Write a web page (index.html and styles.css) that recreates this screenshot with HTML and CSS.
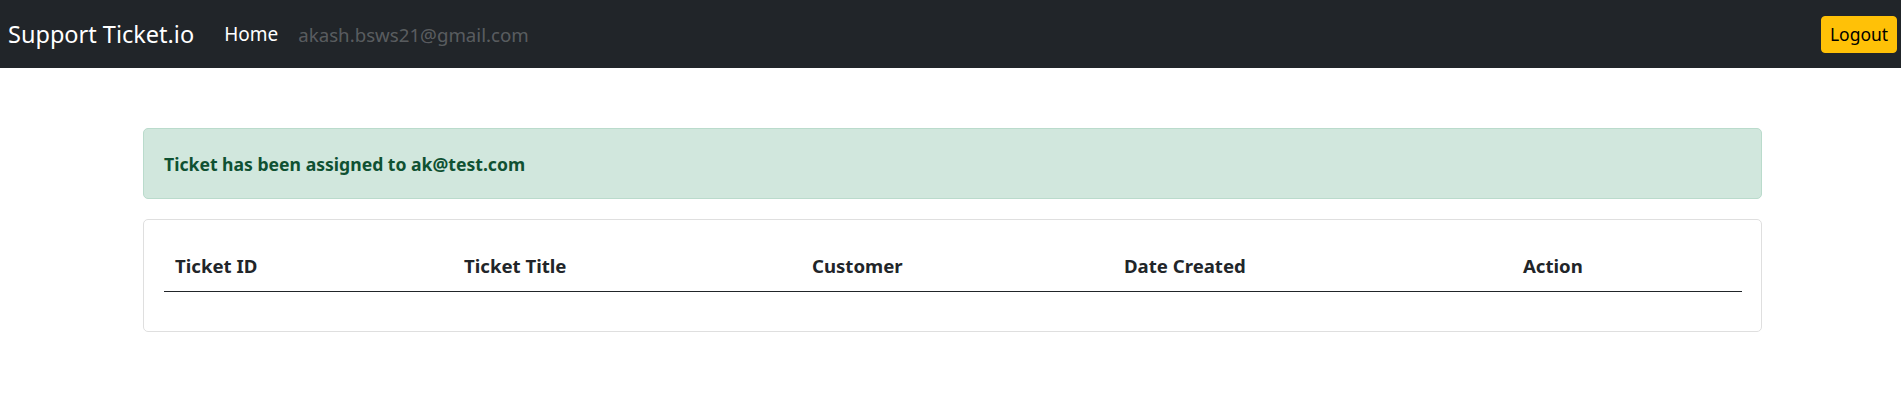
FILE: index.html
```html
<!DOCTYPE html>
<html lang="en">
<head>
<meta charset="utf-8">
<title>Support Ticket.io</title>
<link rel="stylesheet" href="styles.css">
</head>
<body>
<nav class="navbar">
  <a class="brand" href="#">Support Ticket.io</a>
  <a class="nav-link active" href="#">Home</a>
  <span class="nav-link muted">akash.bsws21@gmail.com</span>
  <button class="btn-logout" type="button">Logout</button>
</nav>
<main class="page">
  <div class="alert">Ticket has been assigned to ak@test.com</div>
  <div class="card">
    <table class="table">
      <thead>
        <tr>
          <th class="col-id">Ticket ID</th>
          <th class="col-title">Ticket Title</th>
          <th class="col-customer">Customer</th>
          <th class="col-date">Date Created</th>
          <th class="col-action">Action</th>
        </tr>
      </thead>
      <tbody></tbody>
    </table>
  </div>
</main>
</body>
</html>
```

FILE: styles.css
```css
* { box-sizing: border-box; }
body {
  margin: 0;
  font-family: "Segoe UI", "Noto Sans", "Open Sans", sans-serif;
  color: #212529;
  background: #fff;
}
.navbar {
  display: flex;
  align-items: center;
  height: 68px;
  padding: 0 4px 0 8px;
  background: #212529;
}
.brand {
  font-size: 23.5px;
  color: #fff;
  text-decoration: none;
  margin-right: 30px;
}
.nav-link {
  font-size: 19px;
  text-decoration: none;
  margin-right: 20px;
}
.nav-link.active { color: #fff; }
.nav-link.muted { color: rgba(255,255,255,.27); font-size: 18.7px; }
.btn-logout {
  margin-left: auto;
  width: 76px;
  height: 37px;
  padding: 0;
  background: #ffc107;
  border: 1px solid #ffc107;
  border-radius: 4px;
  color: #000;
  font-family: inherit;
  font-size: 17.5px;
}
.page {
  padding: 60px 139px 0 143px;
}
.alert {
  padding: 21px 20px 19px;
  line-height: 29px;
  font-size: 17.6px;
  font-weight: 700;
  color: #0f5132;
  background: #d1e7dd;
  border: 1px solid #badbcc;
  border-radius: 5px;
  margin-bottom: 20px;
}
.card {
  border: 1px solid #dfdfdf;
  border-radius: 5px;
  padding: 20px;
}
.table {
  width: 100%;
  border-collapse: collapse;
  margin-bottom: 19px;
  table-layout: fixed;
}
.table th {
  text-align: left;
  padding: 11px 11px 10px;
  font-size: 18.6px;
  line-height: 30px;
  font-weight: 700;
  border-bottom: 1px solid #212529;
}
.col-id { width: 289px; }
.col-title { width: 348px; }
.col-customer { width: 312px; }
.col-date { width: 399px; }
.col-action { width: 230px; }
```
